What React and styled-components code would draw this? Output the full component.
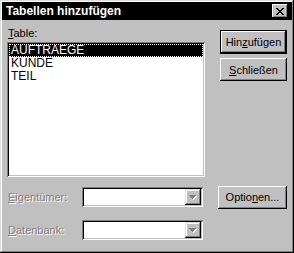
import styled, { createGlobalStyle } from 'styled-components';

const GlobalStyle = createGlobalStyle`
  html, body {
    margin: 0;
    padding: 0;
    background: #c0c0c0;
  }
  body {
    font-family: 'Liberation Sans', Arial, sans-serif;
    font-size: 11px;
    color: #000;
  }
`;

const Window = styled.div`
  width: 294px;
  height: 253px;
  box-sizing: border-box;
  background: #c0c0c0;
  padding: 2px 2px 3px 2px;
  box-shadow: inset -1px -1px 0 #000, inset 1px 1px 0 #dfdfdf,
    inset -2px -2px 0 #808080, inset 2px 2px 0 #fff;
  display: flex;
  flex-direction: column;
`;

const TitleBar = styled.div`
  height: 18px;
  background: #000;
  display: flex;
  align-items: center;
  justify-content: space-between;
  padding: 0 4px 0 4px;
`;

const Title = styled.span`
  color: #fff;
  font-weight: bold;
  font-size: 12px;
`;

const CloseButton = styled.div`
  width: 16px;
  height: 14px;
  box-sizing: border-box;
  background: #c0c0c0;
  box-shadow: inset -1px -1px 0 #000, inset 1px 1px 0 #fff,
    inset -2px -2px 0 #808080;
  display: flex;
  align-items: center;
  justify-content: center;
`;

const Body = styled.div`
  flex: 1;
  display: flex;
  flex-direction: column;
  padding: 7px 5px 0 5px;
`;

const TopSection = styled.div`
  display: flex;
  gap: 15px;
`;

const LeftColumn = styled.div`
  width: 198px;
  display: flex;
  flex-direction: column;
`;

const Label = styled.label`
  display: block;
  line-height: 13px;
  padding-left: 1px;
  white-space: nowrap;
  color: ${(p) => (p.disabled ? '#808080' : '#000')};
  text-shadow: ${(p) => (p.disabled ? '1px 1px 0 #fff' : 'none')};
`;

const U = styled.span`
  text-decoration: underline;
`;

const ListBox = styled.div`
  margin-top: 2px;
  height: 135px;
  box-sizing: border-box;
  background: #fff;
  padding: 2px;
  box-shadow: inset 1px 1px 0 #808080, inset -1px -1px 0 #fff,
    inset 2px 2px 0 #000, inset -2px -2px 0 #c0c0c0;
`;

const ListItem = styled.div`
  height: 13px;
  line-height: 13px;
  font-size: 12px;
  padding-left: 2px;
  box-sizing: border-box;
  color: ${(p) => (p.selected ? '#fff' : '#000')};
  background: ${(p) => (p.selected ? '#000' : 'transparent')};
  outline: ${(p) => (p.selected ? '1px dotted #fff' : 'none')};
  outline-offset: -1px;
`;

const RightColumn = styled.div`
  width: 67px;
  display: flex;
  flex-direction: column;
  gap: 4px;
  padding-top: 3px;
`;

const Button = styled.div`
  height: ${(p) => (p.$default ? '24px' : '23px')};
  box-sizing: border-box;
  display: flex;
  align-items: center;
  justify-content: center;
  background: #c0c0c0;
  box-shadow: ${(p) =>
    p.$default
      ? 'inset 0 0 0 1px #000, inset -2px -2px 0 #000, inset 2px 2px 0 #fff, inset -3px -3px 0 #808080'
      : 'inset -1px -1px 0 #000, inset 1px 1px 0 #fff, inset -2px -2px 0 #808080'};
`;

const BottomSection = styled.div`
  display: grid;
  grid-template-columns: 60px 121px 1fr;
  grid-template-rows: 24px 24px;
  column-gap: 15px;
  row-gap: 9px;
  align-items: center;
  margin-top: 8px;
`;

const ComboBox = styled.div`
  height: 20px;
  box-sizing: border-box;
  background: #fff;
  padding: 2px;
  display: flex;
  justify-content: flex-end;
  box-shadow: inset 1px 1px 0 #808080, inset -1px -1px 0 #fff,
    inset 2px 2px 0 #000, inset -2px -2px 0 #c0c0c0;
`;

const ArrowButton = styled.div`
  width: 16px;
  height: 16px;
  box-sizing: border-box;
  background: #c0c0c0;
  display: flex;
  align-items: center;
  justify-content: center;
  box-shadow: inset -1px -1px 0 #000, inset 1px 1px 0 #dfdfdf,
    inset -2px -2px 0 #808080, inset 2px 2px 0 #fff;
`;

function DisabledArrow() {
  return (
    <svg width="8" height="5" viewBox="0 0 8 5" shapeRendering="crispEdges">
      <path d="M1 1h7v1H1zM2 2h5v1H2zM3 3h3v1H3zM4 4h1v1H4z" fill="#fff" />
      <path d="M0 0h7v1H0zM1 1h5v1H1zM2 2h3v1H2zM3 3h1v1H3z" fill="#808080" />
    </svg>
  );
}

function CloseIcon() {
  return (
    <svg width="8" height="7" viewBox="0 0 8 7" shapeRendering="crispEdges">
      <path
        d="M0 0h2v1H0zM6 0h2v1H6zM1 1h2v1H1zM5 1h2v1H5zM2 2h4v1H2zM3 3h2v1H3zM2 4h4v1H2zM1 5h2v1H1zM5 5h2v1H5zM0 6h2v1H0zM6 6h2v1H6z"
        fill="#000"
      />
    </svg>
  );
}

export default function App() {
  return (
    <>
      <GlobalStyle />
      <Window>
        <TitleBar>
          <Title>Tabellen hinzufügen</Title>
          <CloseButton>
            <CloseIcon />
          </CloseButton>
        </TitleBar>
        <Body>
          <TopSection>
            <LeftColumn>
              <Label>
                <U>T</U>able:
              </Label>
              <ListBox>
                <ListItem selected>AUFTRAEGE</ListItem>
                <ListItem>KUNDE</ListItem>
                <ListItem>TEIL</ListItem>
              </ListBox>
            </LeftColumn>
            <RightColumn>
              <Button $default>
                <span>
                  Hin<U>z</U>ufügen
                </span>
              </Button>
              <Button>
                <span>
                  <U>S</U>chließen
                </span>
              </Button>
            </RightColumn>
          </TopSection>
          <BottomSection>
            <Label disabled>
              <U>E</U>igentümer:
            </Label>
            <ComboBox>
              <ArrowButton>
                <DisabledArrow />
              </ArrowButton>
            </ComboBox>
            <Button>
              <span>
                Optio<U>n</U>en...
              </span>
            </Button>
            <Label disabled>
              <U>D</U>atenbank:
            </Label>
            <ComboBox>
              <ArrowButton>
                <DisabledArrow />
              </ArrowButton>
            </ComboBox>
          </BottomSection>
        </Body>
      </Window>
    </>
  );
}
